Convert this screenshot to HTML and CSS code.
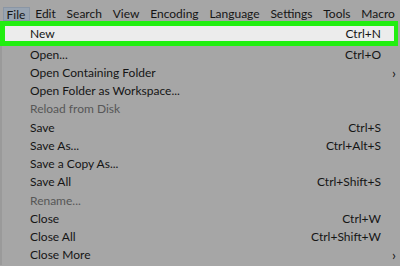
FILE: index.html
```html
<!DOCTYPE html>
<html lang="en">
<head>
    <meta charset="UTF-8">
    <title>File Menu</title>
    <link rel="stylesheet" href="styles.css">
</head>
<body>
    <div class="menubar">
        <span class="menu active">File</span>
        <span class="menu">Edit</span>
        <span class="menu">Search</span>
        <span class="menu">View</span>
        <span class="menu">Encoding</span>
        <span class="menu">Language</span>
        <span class="menu">Settings</span>
        <span class="menu">Tools</span>
        <span class="menu">Macro</span>
    </div>

    <div class="dropdown">
        <div class="item selected"><span>New</span><span class="key">Ctrl+N</span></div>
        <div class="item"><span>Open...</span><span class="key">Ctrl+O</span></div>
        <div class="item"><span>Open Containing Folder</span><span class="key arrow">&#x203A;</span></div>
        <div class="item"><span>Open Folder as Workspace...</span></div>
        <div class="item disabled"><span>Reload from Disk</span></div>
        <div class="item"><span>Save</span><span class="key">Ctrl+S</span></div>
        <div class="item"><span>Save As...</span><span class="key">Ctrl+Alt+S</span></div>
        <div class="item"><span>Save a Copy As...</span></div>
        <div class="item"><span>Save All</span><span class="key">Ctrl+Shift+S</span></div>
        <div class="item disabled"><span>Rename...</span></div>
        <div class="item"><span>Close</span><span class="key">Ctrl+W</span></div>
        <div class="item"><span>Close All</span><span class="key">Ctrl+Shift+W</span></div>
        <div class="item"><span>Close More</span><span class="key arrow">&#x203A;</span></div>
    </div>
</body>
</html>
```

FILE: styles.css
```css
body {
    margin: 0;
    width: 400px;
    height: 266px;
    overflow: hidden;
    background: #a6a6a6;
    font-family: Lato, "Liberation Sans", sans-serif;
    font-size: 12px;
    color: #151515;
}
.menubar {
    display: flex;
    height: 21px;
    padding: 7px 0 0 0;
    box-sizing: border-box;
    white-space: nowrap;
}
.menu {
    padding: 0 5.4px;
    line-height: 14px;
}
.menu.active {
    background: #98a4b2;
    border: 1px solid #8a96a5;
    margin-left: 3px;
    padding: 0 3.5px 0 2.5px;
}
.dropdown {
    border-left: 2px solid #9a9a9a;
}
.item {
    display: flex;
    justify-content: space-between;
    height: 18.25px;
    line-height: 18px;
    padding: 0 19px 0 28px;
}
.item.selected {
    height: 15px;
    line-height: 15px;
    margin: 0 2px -0.5px -2px;
    padding: 0 13px 0 25px;
    background: #ececec;
    border: 5px solid #22ee11;
    border-right-width: 4px;
}
.arrow {
    margin-right: -15px;
    font-size: 14px;
}
.disabled {
    color: #575757;
}
```
